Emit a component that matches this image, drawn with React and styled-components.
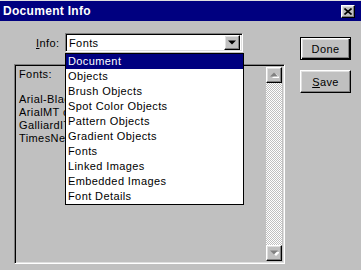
import React from "react";
import styled, { createGlobalStyle } from "styled-components";

const GlobalStyle = createGlobalStyle`
  html, body { margin: 0; padding: 0; background: #c0c0c0; }
  body { font-family: "Liberation Sans", Arial, sans-serif; }
`;

const Window = styled.div`
  width: 361px;
  height: 270px;
  box-sizing: border-box;
  background: #c0c0c0;
  border-top: 1px solid #dfdfdf;
  display: flex;
  flex-direction: column;
  overflow: hidden;
  color: #000;
  font-size: 11px;
  letter-spacing: 0.4px;
`;

const TitleBar = styled.div`
  height: 20px;
  flex: none;
  background: #000080;
  color: #fff;
  display: flex;
  align-items: center;
  justify-content: space-between;
  padding: 0 6px 0 3px;
  font-weight: bold;
  font-size: 12px;
  letter-spacing: 0.3px;
`;

const Raised = `
  box-sizing: border-box;
  background: #c0c0c0;
  border: 1px solid;
  border-color: #fff #000 #000 #fff;
  box-shadow: inset -1px -1px #808080, inset 1px 1px #dfdfdf;
`;

const CloseButton = styled.div`
  ${Raised}
  width: 14px;
  height: 13px;
  display: flex;
  align-items: center;
  justify-content: center;
`;

const Body = styled.div`
  flex: 1;
  display: flex;
  padding-left: 14px;
`;

const Main = styled.div`
  width: 271px;
  display: flex;
  flex-direction: column;
`;

const InfoRow = styled.div`
  margin-top: 12px;
  height: 19px;
  display: flex;
  align-items: center;
  padding-left: 22px;
  gap: 3px;
`;

const Label = styled.span`
  width: 26px;
`;

const Ul = styled.span`
  text-decoration: underline;
  text-underline-offset: 1px;
`;

const ComboWrap = styled.div`
  position: relative;
  width: 178px;
  height: 19px;
`;

const Sunken = `
  box-sizing: border-box;
  border: 1px solid;
  border-color: #808080 #fff #fff #808080;
  box-shadow: inset 1px 1px #000, inset -1px -1px #dfdfdf;
`;

const Combo = styled.div`
  ${Sunken}
  width: 100%;
  height: 100%;
  background: #fff;
  display: flex;
  align-items: center;
  padding: 2px;
`;

const ComboText = styled.span`
  flex: 1;
  padding-left: 1px;
`;

const ArrowButton = styled.div`
  ${Raised}
  width: ${(p) => p.$w || 16}px;
  height: ${(p) => p.$h || 16}px;
  flex: none;
  display: flex;
  align-items: center;
  justify-content: center;
`;

const DropList = styled.div`
  position: absolute;
  top: calc(100% + 1px);
  left: 0;
  width: 179px;
  box-sizing: border-box;
  border: 1px solid #000;
  background: #fff;
  z-index: 2;
`;

const Item = styled.div`
  height: 15px;
  line-height: 15px;
  padding-left: 2px;
  background: ${(p) => (p.$active ? "#000080" : "transparent")};
  color: ${(p) => (p.$active ? "#fff" : "#000")};
  white-space: nowrap;
`;

const Panel = styled.div`
  ${Sunken}
  margin-top: 12px;
  height: 200px;
  background: #c0c0c0;
  display: flex;
  padding: 2px;
`;

const TextArea = styled.div`
  flex: 1;
  padding: 1px 2px;
  line-height: 12.7px;
  white-space: pre;
  overflow: hidden;
`;

const ScrollBar = styled.div`
  width: 16px;
  display: flex;
  flex-direction: column;
`;

const Track = styled.div`
  flex: 1;
  background: repeating-conic-gradient(#c0c0c0 0 25%, #fff 0 50%) 0 0 / 2px 2px;
`;

const Side = styled.div`
  margin-left: 15px;
  padding-top: 16px;
  display: flex;
  flex-direction: column;
  gap: 10px;
`;

const Button = styled.div`
  ${Raised}
  width: 51px;
  height: 23px;
  display: flex;
  align-items: center;
  justify-content: center;
  ${(p) =>
    p.$default &&
    `
    border: 1px solid #000;
    box-shadow: inset 1px 1px #fff, inset -1px -1px #000, inset -2px -2px #808080, inset 2px 2px #dfdfdf;
  `}
`;

const Tri = ({ up, disabled }) => (
  <svg width="9" height="6" viewBox="0 0 9 6">
    {disabled && (
      <polygon
        points={up ? "5,1 9,5 1,5" : "1,1 9,1 5,5"}
        fill="#fff"
        transform="translate(1,1)"
      />
    )}
    <polygon
      points={up ? "4,0 8,4 0,4" : "0,0 8,0 4,4"}
      fill={disabled ? "#808080" : "#000"}
      transform="translate(0,0.5)"
    />
  </svg>
);

const CloseX = () => (
  <svg width="8" height="7" viewBox="0 0 8 7">
    <path d="M0.5 0.5 L7.5 6.5 M7.5 0.5 L0.5 6.5" stroke="#000" strokeWidth="1.6" />
  </svg>
);

const items = [
  "Document",
  "Objects",
  "Brush Objects",
  "Spot Color Objects",
  "Pattern Objects",
  "Gradient Objects",
  "Fonts",
  "Linked Images",
  "Embedded Images",
  "Font Details",
];

const text = `Fonts:

Arial-BlackMT
ArialMT condensed
GalliardITCbyBT-Italic
TimesNewRomanPSMT`;

export default function App() {
  return (
    <>
      <GlobalStyle />
      <Window>
        <TitleBar>
          <span>Document Info</span>
          <CloseButton>
            <CloseX />
          </CloseButton>
        </TitleBar>
        <Body>
          <Main>
            <InfoRow>
              <Label>
                <Ul>I</Ul>nfo:
              </Label>
              <ComboWrap>
                <Combo>
                  <ComboText>Fonts</ComboText>
                  <ArrowButton $w={16} $h={15}>
                    <Tri />
                  </ArrowButton>
                </Combo>
                <DropList>
                  {items.map((it, i) => (
                    <Item key={it} $active={i === 0}>
                      {it}
                    </Item>
                  ))}
                </DropList>
              </ComboWrap>
            </InfoRow>
            <Panel>
              <TextArea>{text}</TextArea>
              <ScrollBar>
                <ArrowButton>
                  <Tri up disabled />
                </ArrowButton>
                <Track />
                <ArrowButton>
                  <Tri disabled />
                </ArrowButton>
              </ScrollBar>
            </Panel>
          </Main>
          <Side>
            <Button $default>Done</Button>
            <Button>
              <span>
                <Ul>S</Ul>ave
              </span>
            </Button>
          </Side>
        </Body>
      </Window>
    </>
  );
}
